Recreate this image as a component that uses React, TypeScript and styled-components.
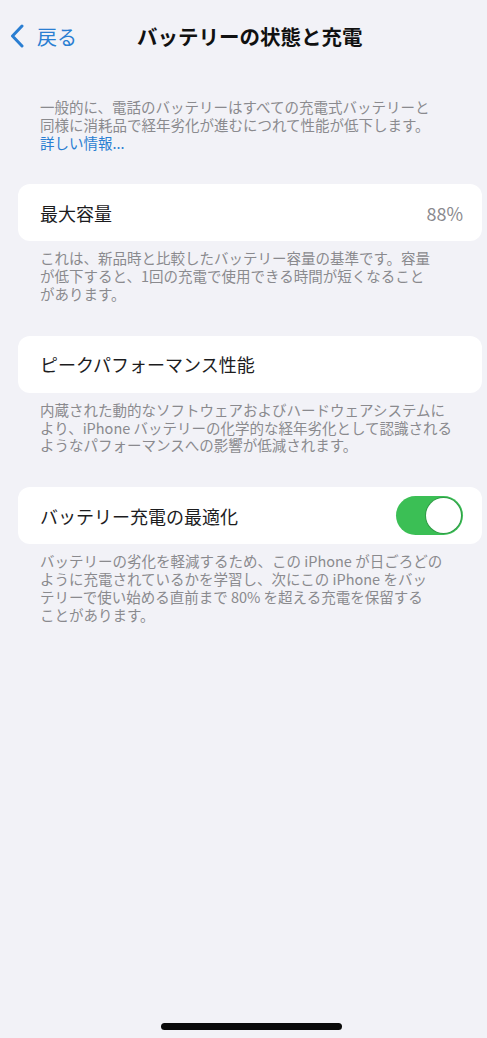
import React from 'react'
import styled, { createGlobalStyle } from 'styled-components'

const GlobalStyle = createGlobalStyle`
  html, body {
    margin: 0;
    padding: 0;
    background: #f2f2f7;
  }
  body {
    font-family: "Noto Sans CJK JP", "Noto Sans", sans-serif;
    -webkit-font-smoothing: antialiased;
  }
`

const Screen = styled.div`
  width: 487px;
  height: 1038px;
  display: flex;
  flex-direction: column;
  background: #f2f2f7;
  overflow: hidden;
`

const NavBar = styled.header`
  height: 72px;
  display: flex;
  align-items: center;
  padding-left: 10px;
  gap: 60px;
`

const BackButton = styled.button`
  display: flex;
  align-items: center;
  gap: 13px;
  padding: 0;
  border: none;
  background: none;
  color: #2a7ed2;
  font-family: inherit;
  font-size: 20px;
  cursor: pointer;
`

const Title = styled.h1`
  margin: 0;
  font-size: 20.5px;
  font-weight: 700;
  color: #111;
`

const Content = styled.main`
  display: flex;
  flex-direction: column;
  gap: 33px;
  padding: 26px 5px 0 18px;
`

const Section = styled.section`
  display: flex;
  flex-direction: column;
  gap: 8px;
`

const Note = styled.p`
  margin: 0;
  padding-left: 22px;
  font-size: 14.5px;
  line-height: 17.8px;
  color: #8a8a8e;
  white-space: nowrap;
`

const Line = styled.span`
  display: block;
  height: 17.8px;
`

const MoreLink = styled.a`
  color: #2a7ed2;
  text-decoration: none;
`

const Card = styled.div`
  height: 57px;
  display: flex;
  align-items: center;
  justify-content: space-between;
  padding: 0 19px 0 22px;
  background: #fff;
  border-radius: 12px;
`

const Label = styled.span`
  font-size: 18px;
  color: #1c1c1e;
`

const Value = styled.span`
  font-size: 18px;
  color: #8a8a8e;
`

const Switch = styled.div<{ $on: boolean }>`
  position: relative;
  width: 67px;
  height: 39px;
  border-radius: 20px;
  background: ${(p) => (p.$on ? '#3bbf55' : '#e5e5ea')};
`

const Knob = styled.span<{ $on: boolean }>`
  position: absolute;
  top: 2px;
  ${(p) => (p.$on ? 'right: 2px;' : 'left: 2px;')}
  width: 35px;
  height: 35px;
  border-radius: 50%;
  background: #fff;
  box-shadow: 0 0 0 1px rgba(40, 130, 60, 0.6);
`

const Spacer = styled.div`
  flex: 1;
`

const HomeIndicator = styled.div`
  align-self: center;
  width: 181px;
  height: 7px;
  margin: 0 0 8px 16px;
  border-radius: 4px;
  background: #0a0a0a;
`

const Chevron = () => (
  <svg width="14" height="24" viewBox="0 0 14 24" fill="none">
    <polyline
      points="12,2 2.5,12 12,22"
      stroke="#2a7ed2"
      strokeWidth="3"
      strokeLinecap="round"
      strokeLinejoin="round"
    />
  </svg>
)

const notes = {
  capacity: [
    'これは、新品時と比較したバッテリー容量の基準です。容量',
    'が低下すると、1回の充電で使用できる時間が短くなること',
    'があります。',
  ],
  peak: [
    '内蔵された動的なソフトウェアおよびハードウェアシステムに',
    'より、iPhone バッテリーの化学的な経年劣化として認識される',
    'ようなパフォーマンスへの影響が低減されます。',
  ],
  optimize: [
    'バッテリーの劣化を軽減するため、この iPhone が日ごろどの',
    'ように充電されているかを学習し、次にこの iPhone をバッ',
    'テリーで使い始める直前まで 80% を超える充電を保留する',
    'ことがあります。',
  ],
}

const NoteLines: React.FC<{ lines: string[] }> = ({ lines }) => (
  <Note>
    {lines.map((l) => (
      <Line key={l}>{l}</Line>
    ))}
  </Note>
)

const App: React.FC = () => {
  return (
    <>
      <GlobalStyle />
      <Screen>
        <NavBar>
          <BackButton>
            <Chevron />
            戻る
          </BackButton>
          <Title>バッテリーの状態と充電</Title>
        </NavBar>

        <Content>
          <Note>
            <Line>一般的に、電話のバッテリーはすべての充電式バッテリーと</Line>
            <Line>同様に消耗品で経年劣化が進むにつれて性能が低下します。</Line>
            <Line>
              <MoreLink href="#">詳しい情報...</MoreLink>
            </Line>
          </Note>

          <Section>
            <Card>
              <Label>最大容量</Label>
              <Value>88%</Value>
            </Card>
            <NoteLines lines={notes.capacity} />
          </Section>

          <Section>
            <Card>
              <Label>ピークパフォーマンス性能</Label>
            </Card>
            <NoteLines lines={notes.peak} />
          </Section>

          <Section>
            <Card>
              <Label>バッテリー充電の最適化</Label>
              <Switch $on>
                <Knob $on />
              </Switch>
            </Card>
            <NoteLines lines={notes.optimize} />
          </Section>
        </Content>

        <Spacer />
        <HomeIndicator />
      </Screen>
    </>
  )
}

export default App
